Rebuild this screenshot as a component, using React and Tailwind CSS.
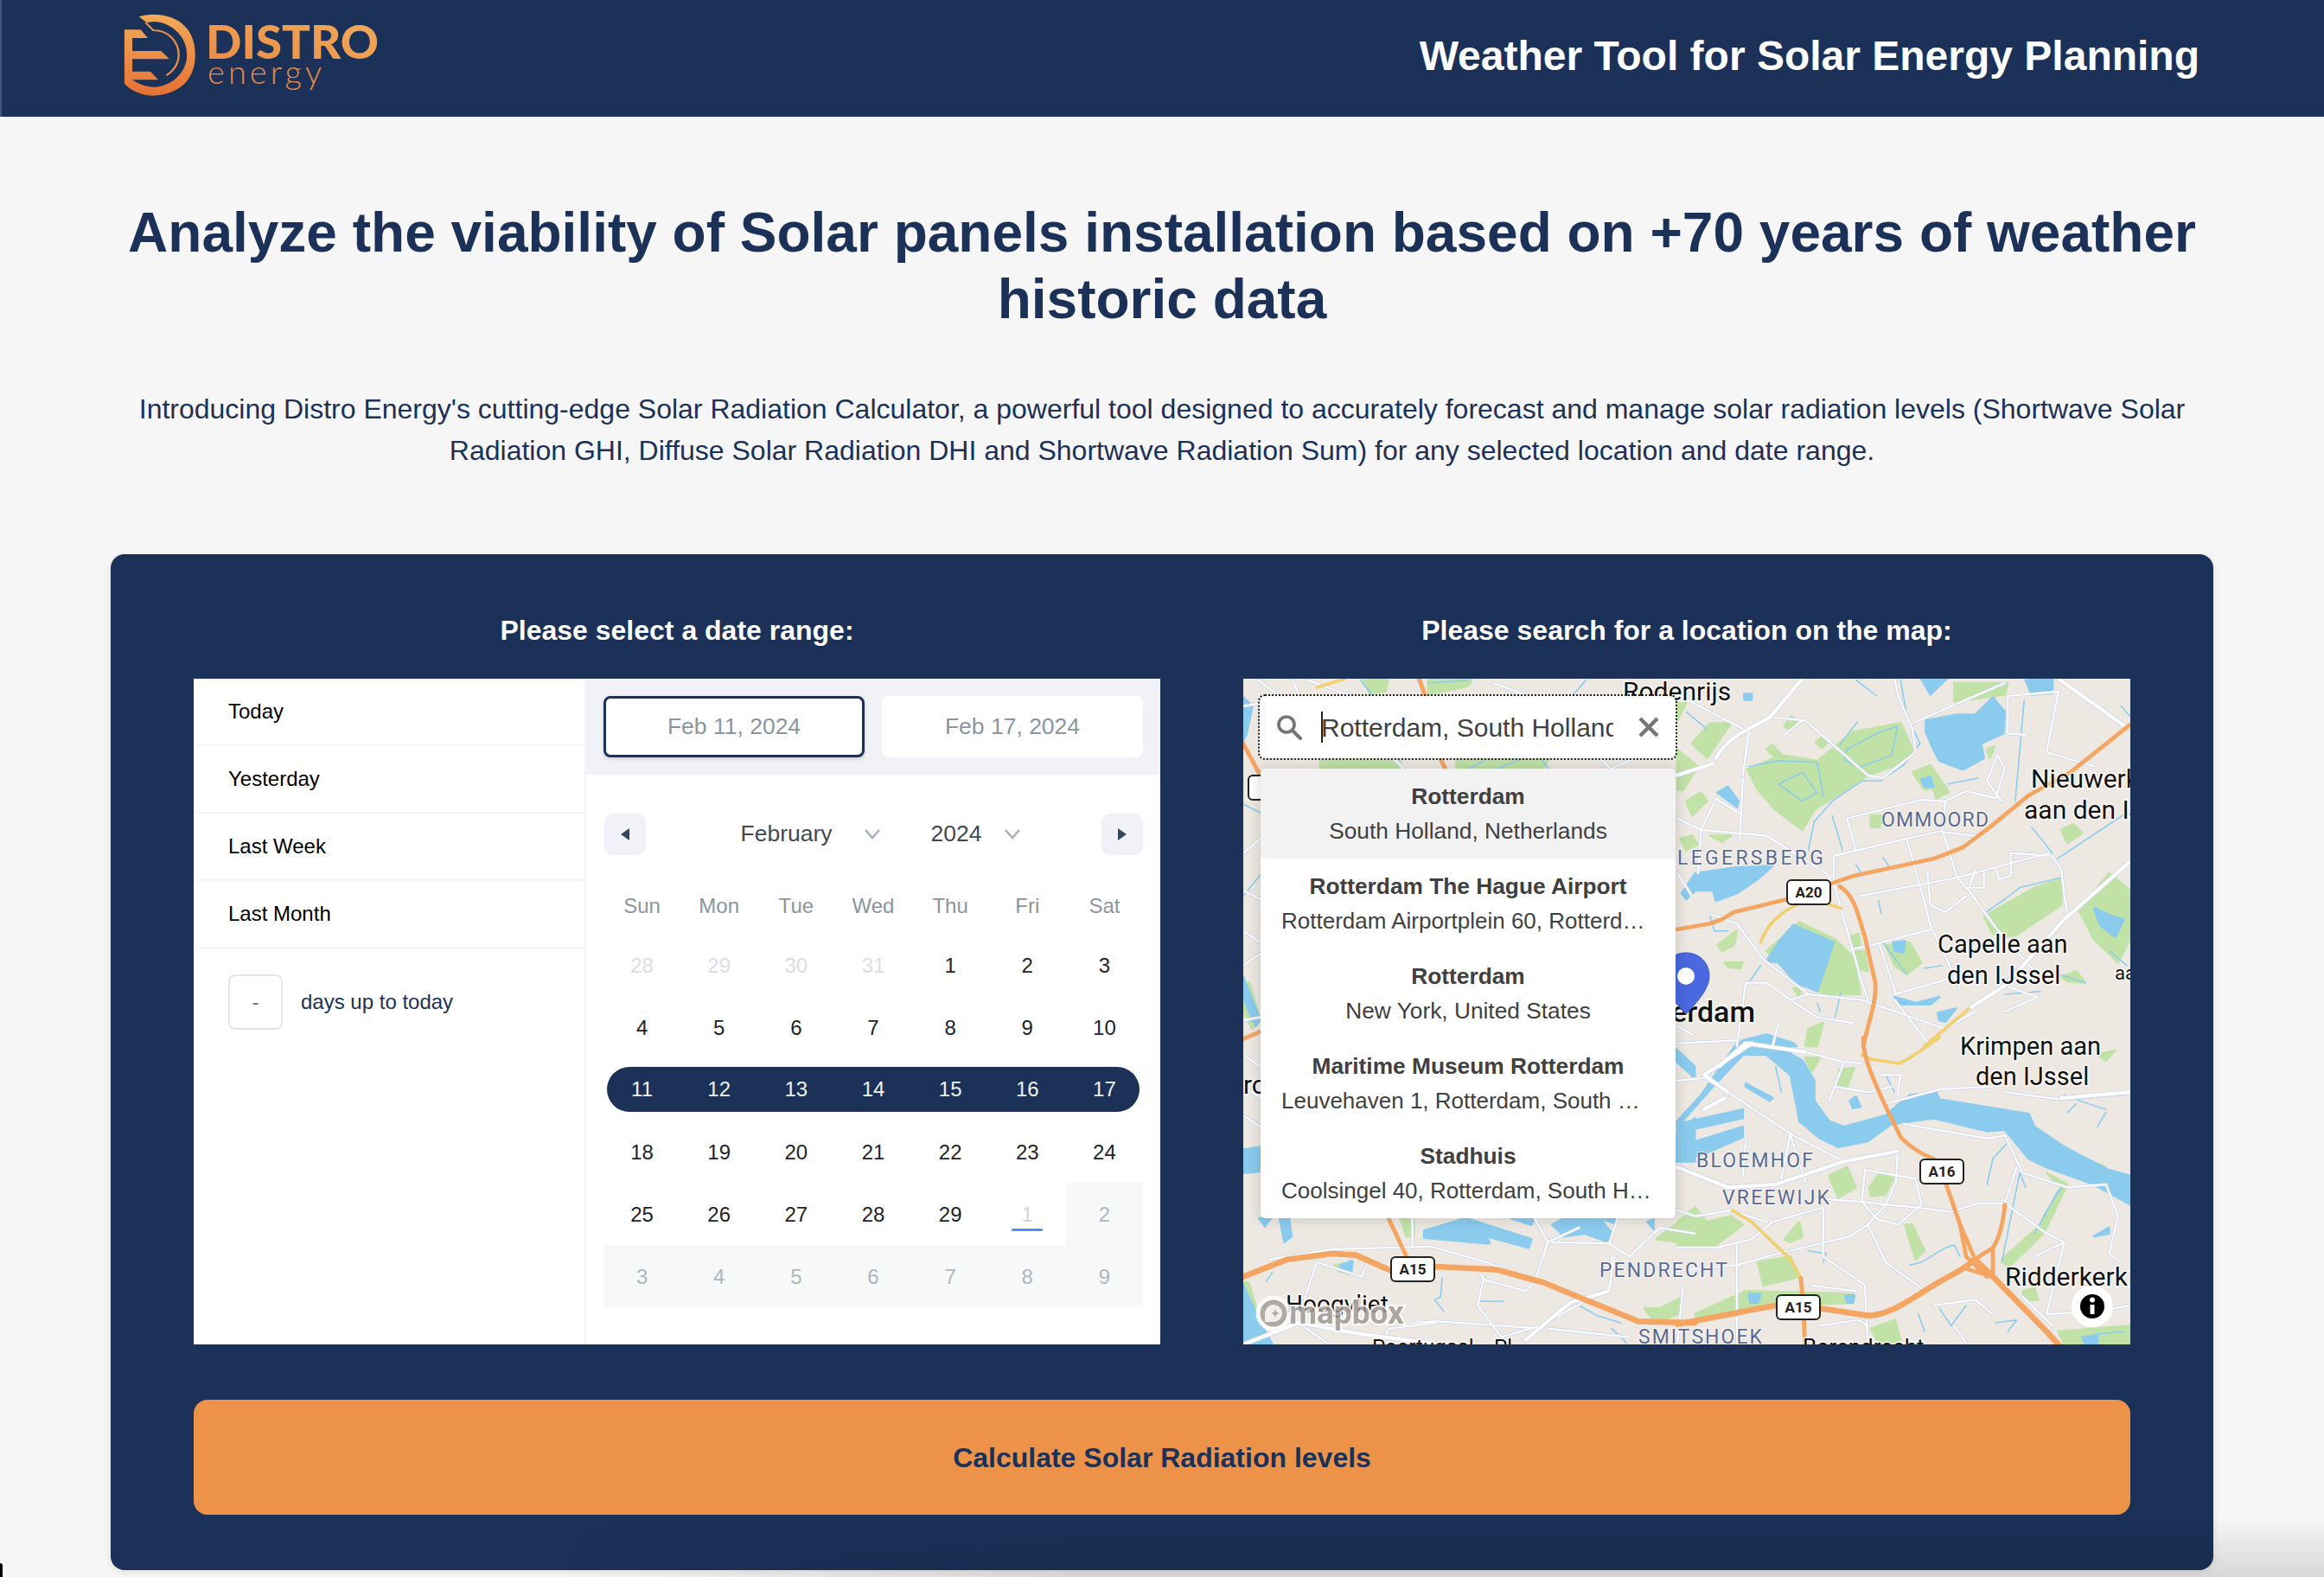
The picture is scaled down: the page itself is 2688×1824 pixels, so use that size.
import React from "react";

const Z = {
  z4: "translate(1420 770) scale(.3571 .3333)",
  z5: "translate(1940 770) scale(.3444 .3333)",
  z6: "translate(1420 1200) scale(.3444 .3333)",
  z7: "translate(1940 1200) scale(.3444 .3333)",
};

const MAP = [
  {
    t: Z.z5,
    green: [
      "M235,360 L350,310 470,330 590,230 750,200 790,290 760,335 640,380 520,460 460,500 420,570 330,500 270,430Z",
      "M50,270 L110,200 180,200 100,320Z",
      "M360,210 L380,175 410,195 380,225Z",
      "M465,265 L490,245 505,265 485,285Z",
      "M300,290 L320,275 350,310 330,320Z",
      "M930,60 L1110,60 1100,100 930,125Z",
      "M790,370 L850,345 900,420 830,430Z",
      "M860,430 L900,415 910,440 870,460Z",
      "M300,990 L410,890 530,950 590,1010 615,1140 500,1140 400,1100 340,1030Z",
      "M1030,870 L1200,770 1290,740 1290,830 1130,940 1060,930Z",
      "M1350,850 L1450,720 1520,780 1520,950 1480,1030 1400,950Z",
      "M0,130 L30,130 0,190Z",
      "M0,290 L70,350 20,430 0,430Z",
      "M30,470 L80,440 100,470 50,520Z",
      "M10,600 L50,590 70,620 30,640Z",
      "M110,590 L180,590 150,610Z",
      "M1290,570 L1330,550 1360,580 1310,615Z",
      "M650,520 L690,520 680,560 650,560Z",
      "M1040,290 L1065,280 1050,320Z",
      "M700,970 L780,960 820,1030 770,1070 730,1040Z",
      "M580,940 L610,930 615,970 590,980Z",
      "M590,990 L630,990 640,1060 600,1050Z",
      "M390,1120 L420,1110 410,1150Z",
      "M160,1030 L220,1030 210,1050 170,1045Z",
      "M440,1260 L490,1240 470,1320 430,1320Z",
      "M1290,1080 L1340,1060 1370,1100 1310,1095Z",
      "M135,970 L200,920 190,970 150,990Z",
    ],
    water: [
      "M835,190 L940,170 1000,170 1060,110 1100,160 1095,235 1020,270 1030,320 960,360 880,330 860,290 835,230Z",
      "M820,45 L905,45 850,100Z",
      "M1170,50 L1260,45 1260,95 1190,100Z",
      "M390,900 L525,960 470,1130 400,1100 340,1030 300,1025 340,960Z",
      "M15,790 L60,720 200,700 320,695 270,740 200,790 130,815 120,780 60,780 30,810Z",
      "M135,440 L170,420 205,470 200,490Z",
      "M820,395 L850,385 860,420 830,420Z",
      "M1400,840 L1460,870 1500,880 1470,940 1420,900Z",
      "M725,960 L765,955 760,995 730,990Z",
      "M730,1150 L800,1170 880,1150 850,1175 740,1175Z",
      "M875,1205 L935,1190 900,1235 880,1230Z",
      "M220,1300 L300,1280 390,1310 400,1320 200,1320Z",
      "M225,98 L250,98 250,118 225,118Z",
    ],
    ditch: [
      "M750,50 L770,170 815,270 760,345 680,400 620,400 520,470 460,540 440,640",
      "M1165,120 L1135,470",
      "M240,350 L340,330 470,335 490,450",
      "M340,410 L420,370 470,440 420,470 340,410",
      "M570,290 L680,230 740,210 720,310 620,350 560,330Z",
      "M30,160 L100,220",
      "M545,275 L605,195",
      "M520,520 L555,640",
      "M600,690 L620,720 M690,665 L710,695",
      "M675,815 L685,860",
      "M1030,860 L1100,810 1150,770 1290,735",
      "M1190,560 L1260,650",
      "M1275,670 L1510,510",
      "M1450,990 L1510,1040",
      "M1280,1070 L1370,1100",
      "M110,870 L125,920 170,920",
      "M240,1100 L280,1040",
      "M910,410 L1010,390",
      "M1490,140 L1560,220",
      "M600,50 L670,105",
      "M830,1050 L890,1040",
      "M690,960 L770,1070",
      "M470,1170 L480,1200 M550,1130 L530,1220",
      "M1100,1140 L1220,1130",
    ],
    minor: [
      "M320,180 L430,190 640,380 690,390 800,300 790,220 740,100 730,45",
      "M800,195 L1100,60",
      "M1110,105 L1280,90 M1110,105 L1110,235 1170,240",
      "M1280,90 L1240,300 1400,350",
      "M570,530 L820,465 900,470 970,435 1070,460 1100,355 1075,310 1040,400 1090,470",
      "M525,660 L770,600 880,575 1000,590",
      "M525,660 L525,750",
      "M570,530 L600,640",
      "M770,600 L830,820 850,900 950,1120",
      "M610,800 L940,735 1250,650",
      "M940,735 L980,780 1070,910 1200,1060",
      "M650,970 L850,915 M585,985 L650,970",
      "M900,470 L890,570 940,735",
      "M730,1140 L900,1090 1000,1090 M735,1140 L680,970",
      "M0,530 L80,570 300,590 500,720 530,770",
      "M130,460 L220,520 M220,390 L210,600",
      "M0,720 L50,800 M130,460 L80,570 70,720",
      "M110,860 L200,895 290,1020 440,1140 620,1160",
      "M440,1140 L380,1160 300,1100 230,1100 200,1320",
      "M530,770 L620,1100 640,1160",
      "M420,190 L360,240 M240,230 L0,100 M240,230 L220,380",
      "M1000,710 L980,770 1030,770 1030,710 M1070,700 L1080,740 1120,730 1120,650 1260,660 1290,710 1300,800 1310,860",
      "M840,715 L850,830 900,855 970,800",
      "M620,1160 L900,1260 1000,1200",
      "M1100,1110 L1210,1150 1100,1200",
      "M590,1240 L470,1220 380,1160",
      "M0,1250 L50,1280 M320,1320 L340,1240",
      "M730,1160 L850,1320",
    ],
    major: [
      "M0,380 L120,340 M130,320 C170,250 220,230 310,180 L420,45",
      "M1520,680 L1300,880 1100,1110 980,1190",
      "M1280,45 L1510,215",
    ],
    orange: [
      "M0,915 L110,895 150,880 190,855 370,810 520,755 590,730 860,670 960,630 1050,560 1180,450 1320,370 1520,205",
      "M545,765 C600,800 610,880 630,940 L665,1100 C670,1170 640,1240 625,1320",
    ],
    wide: [],
    yellow: ["M280,960 C300,900 340,860 410,825 L500,825 550,842", "M980,1190 L830,1320"],
  },
  {
    t: Z.z7,
    green: [
      "M510,480 L570,450 600,520 540,555Z",
      "M0,640 L60,590 100,640 180,620 220,650 130,720 0,720Z",
      "M270,780 L380,760 410,830 290,860Z",
      "M360,700 L410,640 420,690 380,710Z",
      "M60,960 L230,880 590,890 590,920 330,930 70,980Z",
      "M650,1010 L730,980 750,1050 680,1065Z",
      "M1090,770 L1220,650 1290,520 1240,470 1310,510 1230,680 1110,800Z",
      "M1280,1020 L1522,1000 1522,1065 1300,1065Z",
      "M645,520 L680,470 725,490 700,545 650,550Z",
      "M765,650 L790,650 830,740 800,770Z",
      "M1160,880 L1200,870 1210,910 1170,910Z",
      "M545,110 L595,105 570,170 540,165Z",
      "M430,70 L480,70 450,120Z",
      "M1170,300 L1300,390 1440,450 1430,470 1290,420 1190,350Z",
      "M1410,60 L1470,45 1440,80Z",
    ],
    water: [
      "M0,290 L80,200 200,20 300,10 420,80 460,150 460,220 510,290 560,310 700,270 780,200 870,190 880,215 1000,235 1180,265 1200,310 1300,380 1450,460 1522,480 1522,580 1400,510 1240,450 1180,420 1100,320 1040,325 860,280 720,300 640,360 540,380 480,350 410,290 400,230 380,130 300,60 220,60 120,170 0,310Z",
      "M0,380 L220,310 220,345 100,400 0,430Z",
      "M0,300 L220,250 220,280 0,330Z",
      "M230,160 L320,210 310,220 230,170Z",
      "M580,220 L600,205 615,240 590,245Z",
      "M1400,690 L1450,660 1450,680Z",
      "M1360,1040 L1410,1035 1410,1065 1370,1065Z",
      "M240,890 L280,890 270,920 245,920Z",
      "M565,895 L595,895 590,920 570,920Z",
    ],
    ditch: [
      "M1040,510 L1060,420 1105,370",
      "M1090,780 L1150,470 1170,520",
      "M1200,680 L1280,530 M1230,620 L1290,520",
      "M780,790 L820,780 900,730 930,720 950,760",
      "M880,940 L920,1000 970,930",
      "M810,960 L830,1020",
      "M330,100 L350,190",
      "M700,130 L730,190",
      "M900,510 L940,600",
      "M1300,200 L1380,230 1440,250 M1340,230 L1310,260",
      "M440,740 L500,750 490,780",
      "M1070,990 L1140,980 1110,1020",
      "M1400,1030 L1500,1020",
      "M1440,260 L1410,310",
    ],
    minor: [
      "M0,150 L90,140 170,190 390,340 560,430",
      "M0,20 L200,10 M430,50 L560,85 620,90",
      "M560,85 L510,220",
      "M630,460 L800,490 820,580 740,650 670,630 620,570 Z",
      "M490,560 L620,570 700,580 810,590 920,605 1010,575 1100,575 1240,680 1300,710 1200,760",
      "M1100,575 L1140,450",
      "M0,730 L130,730 250,700 320,640 490,590",
      "M490,590 L490,760 630,860 640,1065",
      "M380,740 L580,690 640,650 700,580",
      "M640,650 L700,780 820,870",
      "M200,720 L200,1065",
      "M740,395 L735,500 700,580",
      "M860,930 L1000,910 1060,960",
      "M760,300 L1040,350 1100,340 1160,470 1310,520 1440,510 1480,620",
      "M1160,900 L1260,1000",
      "M1300,710 L1240,960",
      "M0,600 L60,620 180,600 300,640",
      "M230,360 L220,480 M380,330 L350,490 M380,340 L430,500",
      "M0,810 L200,790 370,740",
      "M530,170 L640,190 720,170",
      "M680,130 L750,130 740,200",
      "M1240,960 L1410,950 1522,930",
      "M450,860 L600,880",
      "M930,1000 L970,1060",
      "M20,860 L0,1065",
      "M1100,190 L1290,215 1520,195",
      "M700,230 L880,180 1060,170",
      "M480,1000 L610,980 640,1000",
      "M1480,620 L1450,750 1490,780",
    ],
    major: [
      "M0,450 L170,520 330,510 560,430 740,395",
      "M90,250 L160,210 M170,190 L90,130 250,20",
      "M1290,210 L1522,190",
      "M430,50 L230,20 140,100",
    ],
    orange: [
      "M625,0 C620,60 660,150 700,240 L750,345 C780,380 830,410 860,420 L900,500 950,650 1000,770",
      "M990,775 L1060,730 C1085,690 1095,640 1100,580",
      "M415,835 L420,890 M425,960 L428,1065",
      "M950,650 L970,760 1040,830 M1060,730 L1060,830 M960,800 L1060,830",
    ],
    wide: [
      "M1000,770 L1060,830 1240,1020 1280,1065",
      "M1000,770 C960,810 920,820 830,880 C780,910 720,960 640,965 L480,940 330,930 0,995",
    ],
    yellow: ["M185,600 L250,640 380,770 415,835", "M620,60 L650,75 745,90 C790,70 840,30 880,0"],
  },
  {
    t: Z.z6,
    green: [
      "M1430,950 L1520,905 1510,960 1440,990Z",
      "M1400,940 L1450,940 1425,975Z",
      "M580,627 L625,627 625,690 600,690Z",
      "M1450,690 L1568,600 1568,715 1440,700Z",
      "M360,790 L420,780 410,820 370,810Z",
      "M52,850 L70,850 110,990 80,990Z",
    ],
    water: [
      "M52,390 L110,380 110,465 52,470Z",
      "M1505,340 L1568,280 1568,430 1505,430Z",
      "M660,670 L800,627 1020,700 1010,730 870,690 880,715 660,695Z",
      "M950,627 L1030,627 1020,650Z",
      "M1090,650 L1130,627 1250,627 1290,680 1280,710 1200,680 1130,690Z",
      "M1250,627 L1310,627 1300,645Z",
      "M52,860 L110,990 150,1065 52,1065Z",
      "M105,627 L145,627 125,655Z",
      "M175,627 L205,627 215,690 190,710Z",
      "M1505,40 L1568,100 1568,140 1505,80Z",
      "M1410,640 L1430,630 1430,665Z",
      "M380,790 L418,775 415,820 375,810Z",
    ],
    ditch: [
      "M720,835 L715,900 695,910 725,950",
      "M845,915 L925,915",
      "M1180,930 L1240,965 1320,990",
      "M1290,1010 L1340,1060",
      "M130,845 L150,815",
    ],
    minor: [
      "M140,770 L350,735 680,725 870,780 1030,850",
      "M1075,710 L1030,850 1000,880 860,840 850,820",
      "M1090,710 L1280,715 1350,760",
      "M1180,660 L1075,710 1060,760",
      "M300,780 L450,830 470,780",
      "M840,930 L920,1040 1050,1000 1280,870 1300,760",
      "M860,830 L840,930",
      "M260,900 L250,1000 340,1065",
      "M620,990 L700,985 1050,1010",
      "M1080,1010 L1350,1040",
      "M620,630 L620,730",
      "M1030,627 L1075,710",
      "M1280,720 L1310,627",
      "M1290,760 L1285,870",
      "M1350,760 L1450,660 1568,680",
      "M520,1065 L540,1010 700,990",
      "M300,780 L260,900",
      "M52,170 L110,210 M52,270 L110,310 M52,60 L110,100",
    ],
    major: ["M52,1065 L240,990 450,1030 720,1065", "M1000,1050 L1150,920 1280,880"],
    orange: ["M540,627 L605,770"],
    wide: ["M52,830 L200,770 350,750 430,755 550,810 700,795 900,805 1060,850 1200,910 1380,985 1568,990"],
    yellow: [],
  },
  {
    t: Z.z4,
    green: [
      "M650,50 L790,50 780,70 650,100Z",
      "M300,330 L560,330 560,358 300,358Z",
      "M740,325 L1040,325 1020,358 740,358Z",
      "M50,1100 L70,1100 105,1230 80,1260 50,1200Z",
      "M440,50 L520,50 510,90 460,95Z",
    ],
    water: ["M50,110 L80,140 60,240 50,260Z", "M50,1080 L105,1230 90,1250 50,1150Z"],
    ditch: ["M430,50 L470,105", "M50,480 L105,510", "M110,720 L50,800", "M650,60 L780,50", "M1120,100 L1160,50", "M780,358 L830,330 M870,358 L950,325 M1020,330 L1040,358"],
    minor: [
      "M50,140 L110,130 M100,50 L160,100 M210,50 L230,100",
      "M50,780 L105,810 M50,920 L105,960 M50,1040 L105,1000 M50,650 L105,600 M50,1230 L105,1220",
      "M260,50 L400,105 M860,60 L960,100",
      "M540,325 L570,358 M1210,325 L1240,358 1310,325",
    ],
    major: [],
    orange: ["M50,270 L105,380", "M620,45 L640,105", "M690,325 L705,358", "M50,1295 L105,1270"],
    wide: [],
    yellow: ["M290,75 L380,45"],
  },
];

const strokeLayer = (key, stroke, width) =>
  MAP.map((g, i) => (
    <g key={key + i} transform={g.t} fill="none" stroke={stroke} strokeWidth={width} strokeLinecap="round" strokeLinejoin="round">
      {(g[key] || []).map((d, j) => (
        <path key={j} d={d} />
      ))}
    </g>
  ));

const fillLayer = (key, fill) =>
  MAP.map((g, i) => (
    <g key={key + i} transform={g.t} fill={fill} stroke={fill} strokeWidth="8" strokeLinejoin="round">
      {(g[key] || []).map((d, j) => (
        <path key={j} d={d} />
      ))}
    </g>
  ));

function Label({ x, y, size = 29, weight = 400, anchor = "start", children }) {
  return (
    <text x={x} y={y} fontSize={size} fontWeight={weight} textAnchor={anchor} fill="#111" stroke="#ffffff" strokeOpacity=".8" strokeWidth="3" paintOrder="stroke" fontFamily="Roboto, sans-serif">
      {children}
    </text>
  );
}

function Area({ x, y, len, anchor = "start", children }) {
  return (
    <text x={x} y={y} fontSize="23" textLength={len} textAnchor={anchor} fill="#5a6a90" stroke="#ffffff" strokeOpacity=".7" strokeWidth="2" paintOrder="stroke" fontFamily="Roboto, sans-serif">
      {children}
    </text>
  );
}

function Shield({ x, y, w = 50, h = 28, children }) {
  return (
    <g>
      <rect x={x} y={y} width={w} height={h} rx="5" fill="#fff" stroke="#222" strokeWidth="2" />
      <text x={x + w / 2} y={y + h / 2 + 6} fontSize="17" fontWeight="700" textAnchor="middle" fill="#222" fontFamily="Roboto, sans-serif">
        {children}
      </text>
    </g>
  );
}

function MapCanvas() {
  return (
    <svg viewBox="1438 785 1026 770" className="block h-full w-full bg-[#ede8e2]">
      {fillLayer("green", "#c0e2a6")}
      {fillLayer("water", "#8acbee")}
      {strokeLayer("ditch", "#8acbee", 4.5)}
      {strokeLayer("minor", "#cfd7ea", 11)}
      {strokeLayer("minor", "#ffffff", 6)}
      {strokeLayer("major", "#cfd7ea", 17)}
      {strokeLayer("major", "#ffffff", 12)}
      {strokeLayer("yellow", "#f0d070", 11)}
      {strokeLayer("orange", "#f4a562", 14)}
      {strokeLayer("wide", "#f4a562", 20)}

      <Label x={1877} y={810} size={30}>Rodenrijs</Label>
      <Label x={2349} y={911} size={30}>Nieuwerkerk</Label>
      <Label x={2341} y={947} size={30}>aan den IJssel</Label>
      <Label x={2241} y={1102}>Capelle aan</Label>
      <Label x={2252} y={1138}>den IJssel</Label>
      <Label x={2446} y={1133} size={22}>aan</Label>
      <Label x={2267} y={1220}>Krimpen aan</Label>
      <Label x={2285} y={1255}>den IJssel</Label>
      <Label x={2319} y={1487} size={30}>Ridderkerk</Label>
      <Label x={2030} y={1182} size={34} weight={500} anchor="end">Rotterdam</Label>
      <Label x={1438} y={1265} size={30}>ro</Label>
      <Label x={1487} y={1518} size={28}>Hoogvliet</Label>
      <Label x={1587} y={1566} size={24}>Poortugaal</Label>
      <Label x={1728} y={1566} size={24}>Pl</Label>
      <Label x={2085} y={1567} size={26}>Barendrecht</Label>

      <Area x={2176} y={956} len={124}>OMMOORD</Area>
      <Area x={2109} y={1000} len={214} anchor="end">HILLEGERSBERG</Area>
      <Area x={1962} y={1350} len={135}>BLOEMHOF</Area>
      <Area x={1992} y={1393} len={124}>VREEWIJK</Area>
      <Area x={1850} y={1477} len={148}>PENDRECHT</Area>
      <Area x={1895} y={1554} len={143}>SMITSHOEK</Area>

      <Shield x={2067} y={1018}>A20</Shield>
      <Shield x={2221} y={1341}>A16</Shield>
      <Shield x={1609} y={1454}>A15</Shield>
      <Shield x={2055} y={1498}>A15</Shield>
      <Shield x={1444} y={897} w={40}>A</Shield>

      {/* marker */}
      <path d="M1950,1102 C1966,1102 1977,1114 1977,1129 C1977,1144 1962,1160 1950,1173 C1938,1160 1923,1144 1923,1129 C1923,1114 1934,1102 1950,1102Z" fill="#4a68e0" stroke="#3f58bd" strokeWidth="1" />
      <circle cx="1950" cy="1129" r="10" fill="#fff" />

      {/* mapbox mark */}
      <g opacity=".85">
        <text x="1491" y="1531" fontSize="37" fontWeight="700" fill="#a09a94" stroke="#fff" strokeWidth="4" paintOrder="stroke" fontFamily="Roboto, sans-serif">mapbox</text>
        <circle cx="1473" cy="1519" r="18" fill="#a6a09a" stroke="#fff" strokeWidth="5" />
        <path d="M1473,1509 a10,10 0 0 1 10,10 a10,10 0 0 1 -10,10 l-10,0 l0,-10 a10,10 0 0 1 10,-10Z" fill="#f4f2f0" />
        <path d="M1475,1514 l1.5,3.5 3.5,1.5 -3.5,1.5 -1.5,3.5 -1.5,-3.5 -3.5,-1.5 3.5,-1.5Z" fill="#a6a09a" />
      </g>

      {/* attribution */}
      <circle cx="2420" cy="1511" r="24" fill="#fff" />
      <circle cx="2420" cy="1511" r="14" fill="#000" />
      <rect x="2417.5" y="1509" width="5" height="11" fill="#fff" />
      <circle cx="2420" cy="1503.5" r="3" fill="#fff" />
    </svg>
  );
}

function Logo() {
  return (
    <svg width="460" height="135" viewBox="0 0 460 135" className="block">
      <defs>
        <linearGradient id="lg" x1="0" y1="0" x2="0" y2="1">
          <stop offset="0" stopColor="#f1ab59" />
          <stop offset="1" stopColor="#e67135" />
        </linearGradient>
        <linearGradient id="lg2" x1="0" y1="1" x2="1" y2="0">
          <stop offset="0" stopColor="#ea8a47" />
          <stop offset="1" stopColor="#f0ad5a" />
        </linearGradient>
      </defs>
      <g transform="translate(-2 0) scale(.3827 .3333)">
        <path
          fill="url(#lg)"
          d="M420,58 C470,38 590,50 590,190 C590,330 470,332 465,332 C430,332 395,315 376,290 L376,103 425,103 447,132 400,132 400,177 487,177 512,205 400,205 400,248 455,248 478,277 400,277 C420,292 440,302 465,302 C510,302 565,260 565,190 C565,120 510,75 465,75 L443,78Z"
        />
        <path fill="none" stroke="#ec9048" strokeWidth="6" d="M440,78 L463,105 C510,105 540,145 540,190 C540,220 525,245 503,262" />
      </g>
      <text x="236" y="68" fontSize="54" fontWeight="900" fill="url(#lg2)" textLength="200" lengthAdjust="spacingAndGlyphs" fontFamily="Lato, sans-serif">DISTRO</text>
      <text x="238" y="97" fontSize="38" fontWeight="300" fill="#e98a48" textLength="132" fontFamily="Lato, sans-serif">energy</text>
    </svg>
  );
}

function Tri({ dir }) {
  return (
    <div className="flex h-[48px] w-[48px] items-center justify-center rounded-[10px] bg-[#f0f2f7]">
      <svg width="14" height="16" viewBox="0 0 14 16">
        <path d={dir === "l" ? "M12,1 L12,15 L2,8Z" : "M2,1 L2,15 L12,8Z"} fill="#33475b" />
      </svg>
    </div>
  );
}

function Chev() {
  return (
    <svg width="20" height="14" viewBox="0 0 20 14" fill="none" stroke="#a8b0b8" strokeWidth="2.6" className="block">
      <path d="M2,2 L10,11 L18,2" />
    </svg>
  );
}

const WEEKS = [
  [[28, "p"], [29, "p"], [30, "p"], [31, "p"], [1], [2], [3]],
  [[4], [5], [6], [7], [8], [9], [10]],
  [[11, "s0"], [12, "s"], [13, "s"], [14, "s"], [15, "s"], [16, "s"], [17, "s1"]],
  [[18], [19], [20], [21], [22], [23], [24]],
  [[25], [26], [27], [28], [29], [1, "t"], [2, "d"]],
  [[3, "d"], [4, "d"], [5, "d"], [6, "d"], [7, "d"], [8, "d"], [9, "d"]],
];

function Day({ n, k }) {
  if (k === "s0" || k === "s" || k === "s1") {
    const shape =
      k === "s0"
        ? "ml-[4px] w-[calc(100%-4px)] pr-[4px] rounded-l-full"
        : k === "s1"
          ? "mr-[4px] w-[calc(100%-4px)] pl-[4px] rounded-r-full"
          : "w-full";
    return (
      <div className="flex h-[72px] items-center">
        <div className={`flex h-[52px] items-center justify-center bg-[#1b3158] text-[#eef1f6] ${shape}`}>{n}</div>
      </div>
    );
  }
  if (k === "d") return <div className="flex h-[72px] items-center justify-center bg-[#f7f8f8] pt-[2px] text-[#aeb7be]">{n}</div>;
  if (k === "p") return <div className="flex h-[72px] items-center justify-center pt-[2px] text-[#d9dee2]">{n}</div>;
  if (k === "t")
    return (
      <div className="relative flex h-[72px] items-center justify-center pt-[2px] text-[#cfd5da]">
        {n}
        <span className="absolute bottom-[16px] left-1/2 h-[3px] w-[36px] -translate-x-1/2 rounded-full bg-[#4f8ff7]" />
      </div>
    );
  return <div className="flex h-[72px] items-center justify-center pt-[2px] text-[#1f2328]">{n}</div>;
}

function DatePanel() {
  return (
    <div className="flex h-[770px] w-[1118px] bg-white font-['Liberation_Sans',sans-serif]">
      <div className="w-[454px] shrink-0 border-r-2 border-[#f3f4f8] text-[24px] text-black">
        {["Today", "Yesterday", "Last Week", "Last Month"].map((t) => (
          <div key={t} className="flex h-[78px] items-center border-b-2 border-[#f3f4f8] pl-[40px]">
            {t}
          </div>
        ))}
        <div className="flex items-center gap-[21px] pl-[40px] pt-[30px]">
          <div className="flex h-[64px] w-[63px] items-center justify-center rounded-[8px] border-2 border-[#e3e7ec] text-[24px] text-[#6f7c88]">-</div>
          <span className="text-[24px] text-[#1b3158]">days up to today</span>
        </div>
      </div>
      <div className="flex-1">
        <div className="flex h-[111px] gap-[20px] bg-[#f0f2f7] px-[20px] pt-[20px] text-[26.5px] text-[#8b95a0]">
          <div className="flex h-[71px] w-[302px] items-center justify-center rounded-[8px] border-[3px] border-[#1b3158] bg-white shadow-[0_2px_4px_rgba(0,0,0,0.15)]">Feb 11, 2024</div>
          <div className="flex h-[71px] w-[302px] items-center justify-center rounded-[8px] bg-white">Feb 17, 2024</div>
        </div>
        <div className="mt-[45px] flex h-[48px] items-center justify-between pl-[21px] pr-[20px] text-[26.5px] text-[#3f4a55]">
          <Tri dir="l" />
          <div className="ml-[24px] flex items-center">
            <span className="w-[108px] text-center">February</span>
            <span className="ml-[35px]"><Chev /></span>
            <span className="ml-[58px]">2024</span>
            <span className="ml-[26px]"><Chev /></span>
            <span className="ml-[8px]" />
          </div>
          <Tri dir="r" />
        </div>
        <div className="mt-[35px] grid h-[48px] grid-cols-7 items-center px-[20px] text-center text-[24px] text-[#8a959e]">
          {["Sun", "Mon", "Tue", "Wed", "Thu", "Fri", "Sat"].map((d) => (
            <div key={d}>{d}</div>
          ))}
        </div>
        <div className="mt-[8px] grid grid-cols-7 px-[20px] text-[24px]">
          {WEEKS.flat().map(([n, k], i) => (
            <Day key={i} n={n} k={k} />
          ))}
        </div>
      </div>
    </div>
  );
}

const RESULTS = [
  ["Rotterdam", "South Holland, Netherlands", "text-[26.3px]"],
  ["Rotterdam The Hague Airport", "Rotterdam Airportplein 60, Rotterdam, South Holland, Netherlands", "text-[26px]"],
  ["Rotterdam", "New York, United States", "text-[26.3px]"],
  ["Maritime Museum Rotterdam", "Leuvehaven 1, Rotterdam, South Holland, Netherlands", "text-[26px]"],
  ["Stadhuis", "Coolsingel 40, Rotterdam, South Holland, Netherlands", "text-[26px]"],
];

function MapPanel() {
  return (
    <div className="relative h-[770px] w-[1026px] overflow-hidden font-['Liberation_Sans',sans-serif]">
      <MapCanvas />
      <div className="absolute left-[19px] top-[20px] flex h-[72px] w-[481px] items-center rounded-[6px] bg-white outline-2 outline-dotted outline-[#222]">
        <svg className="ml-[19px]" width="30" height="30" viewBox="0 0 30 30" fill="none" stroke="#757575">
          <circle cx="12" cy="12" r="9" strokeWidth="3.6" />
          <path d="M19,19 L28,28" strokeWidth="4" strokeLinecap="round" />
        </svg>
        <span className="-mr-[2px] ml-[22px] h-[36px] w-[2px] bg-[#222]" />
        <input readOnly value="Rotterdam, South Holland" className="w-[338px] border-0 bg-transparent p-0 text-[30px] text-[#404040] outline-none" />
        <svg className="ml-[29px]" width="24" height="24" viewBox="0 0 24 24" stroke="#757575" strokeWidth="4.4">
          <path d="M2,2 L22,22 M22,2 L2,22" />
        </svg>
      </div>
      <div className="absolute left-[20px] top-[104px] w-[480px] overflow-hidden rounded-[6px] bg-white shadow-[0_0_14px_3px_rgba(0,0,0,0.12)]">
        {RESULTS.map(([a, b, size], i) => (
          <div key={i} className={`flex h-[104px] flex-col justify-center px-[24px] text-center leading-[40px] text-[#404040] ${i === 0 ? "bg-[#f2f2f2]" : ""}`}>
            <div className="truncate text-[26.3px] font-bold">{a}</div>
            <div className={`truncate ${size}`}>{b}</div>
          </div>
        ))}
      </div>
    </div>
  );
}

export default function App() {
  return (
    <div className="relative h-[1824px] overflow-hidden bg-[#f6f6f6] font-['Liberation_Sans',sans-serif]">
      <header className="flex h-[135px] items-center justify-between border-l-2 border-[#42587a] bg-[#1b3158] pr-[144px]">
        <Logo />
        <div className="mb-[6px] text-[48px] font-bold text-white">Weather Tool for Solar Energy Planning</div>
      </header>
      <main className="mx-auto w-[2432px]">
        <h1 className="pt-[96px] text-center text-[64px] font-bold leading-[77px] text-[#1b3158]">
          Analyze the viability of Solar panels installation based on +70 years of weather historic data
        </h1>
        <p className="mt-[64px] text-center text-[32px] leading-[48px] text-[#1b3158]">
          Introducing Distro Energy's cutting-edge Solar Radiation Calculator, a powerful tool designed to accurately forecast and manage solar radiation levels (Shortwave Solar Radiation GHI, Diffuse Solar Radiation DHI and Shortwave Radiation Sum) for any selected location and date range.
        </p>
        <section className="mt-[96px] rounded-[16px] bg-[#1b3158] px-[96px] pb-[64px] pt-[64px] shadow-[0_2px_8px_rgba(0,0,0,0.1)]">
          <div className="flex justify-between">
            <div>
              <h2 className="mb-[32px] text-center text-[32px] font-bold leading-[48px] text-white">Please select a date range:</h2>
              <DatePanel />
            </div>
            <div>
              <h2 className="mb-[32px] text-center text-[32px] font-bold leading-[48px] text-white">Please search for a location on the map:</h2>
              <MapPanel />
            </div>
          </div>
          <button className="mt-[64px] block h-[133px] w-full rounded-[16px] bg-[#ec9349] text-[32px] font-bold text-[#1b3158]">
            Calculate Solar Radiation levels
          </button>
        </section>
      </main>
      <div className="pointer-events-none absolute bottom-0 right-0 h-[70px] w-[2040px] bg-gradient-to-t from-[#0000001f] to-transparent [mask-image:linear-gradient(to_right,transparent,black_30%)]" />
      <div className="absolute bottom-0 left-0 h-[16px] w-[3px] rounded-tr-full bg-black" />
    </div>
  );
}
